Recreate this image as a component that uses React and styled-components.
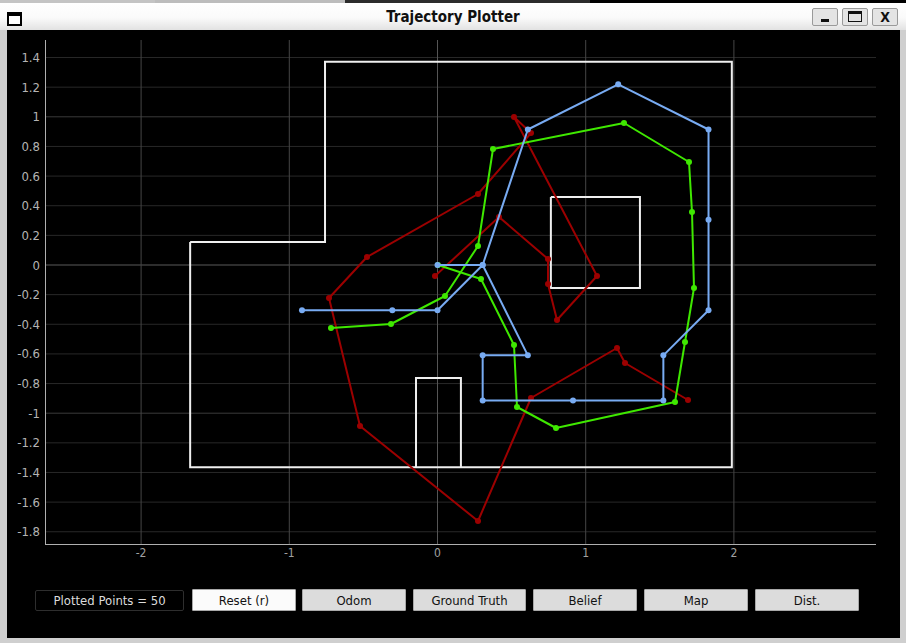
import React from "react";
import styled, { createGlobalStyle } from "styled-components";

const GlobalStyle = createGlobalStyle`
  html, body {
    margin: 0;
    padding: 0;
    background: #c9c9c9;
    overflow: hidden;
  }
  * { box-sizing: border-box; }
`;

const FONT = `"DejaVu Sans Condensed", "DejaVu Sans", sans-serif`;

// world -> page pixels
const X0 = 437.5;
const Y0 = 265;
const S = 148.2;
const px = (x) => X0 + x * S;
const py = (y) => Y0 - y * S;

const FT = 0.3048;

const blue = [
  [0, 0], [1, 0], [2, -2], [1, -2], [1, -3], [3, -3], [5, -3], [5, -2],
  [6, -1], [6, 1], [6, 3], [4, 4], [2, 3], [1, 0], [0, -1], [-1, -1], [-3, -1],
].map(([x, y]) => [px(x * FT), py(y * FT)]);

const green = [
  [438, 265], [481, 279], [514, 345], [517, 407], [556, 428], [675, 402],
  [685, 342], [694, 288], [692, 212], [689, 162], [624, 123], [493, 149],
  [478, 246], [445, 296], [391, 324], [331, 328],
];

const red = [
  [435, 276], [499, 217], [548, 259], [548, 284], [557, 320], [597, 276],
  [514, 117], [531, 133], [478, 194], [367, 257], [329, 298], [360, 426],
  [478, 521], [531, 398], [617, 348], [625, 363], [688, 400],
];

const mapLines = [
  [[-1.669, 0.155], [-0.759, 0.155], [-0.759, 1.371], [1.986, 1.371], [1.986, -1.364], [-1.669, -1.364], [-1.669, 0.155]],
  [[0.765, 0.459], [1.366, 0.459], [1.366, -0.155], [0.765, -0.155], [0.765, 0.459]],
  [[-0.145, -1.364], [-0.145, -0.763], [0.158, -0.763], [0.158, -1.364]],
];

const yTicks = [];
for (let i = -9; i <= 7; i++) yTicks.push(i / 5);
const xTicks = [-2, -1, 0, 1, 2];

const fmt = (v) => (Math.abs(v) < 1e-9 ? "0" : String(+v.toFixed(1)));

const Frame = styled.div`
  width: 906px;
  height: 643px;
  display: flex;
  flex-direction: column;
  background: #cfcfcf;
`;

const Desktop = styled.div`
  height: 3px;
  display: flex;
`;

const DeskPart = styled.div`
  width: ${(p) => p.$w};
  flex: ${(p) => (p.$w ? "none" : 1)};
  background: ${(p) => p.$c};
`;

const TitleBar = styled.div`
  height: 27px;
  display: flex;
  align-items: center;
  padding: 0 7px;
  background: linear-gradient(#ffffff 0%, #fafafa 55%, #e2e2e2 100%);
`;

const AppIcon = styled.div`
  width: 15px;
  height: 14px;
  margin-top: 4px;
  border: 2px solid #000;
  border-top-width: 4px;
  background: #fff;
`;

const Title = styled.div`
  flex: 1;
  text-align: center;
  font-family: ${FONT};
  font-weight: bold;
  font-size: 15px;
  color: #111;
  padding-left: 72px;
`;

const Controls = styled.div`
  display: flex;
  gap: 4px;
  margin-right: 1px;
`;

const CtlButton = styled.div`
  width: 26px;
  height: 18px;
  border: 1px solid #9a9a9a;
  border-radius: 2px;
  background: #e4e4e4;
  display: flex;
  align-items: center;
  justify-content: center;
  font-family: ${FONT};
  font-size: 14px;
  font-weight: bold;
  color: #111;
`;

const MinGlyph = styled.span`
  width: 8px;
  height: 3px;
  margin-top: 8px;
  background: #111;
`;

const MaxGlyph = styled.span`
  width: 14px;
  height: 11px;
  border: 1px solid #111;
  border-top-width: 3px;
`;

const Body = styled.div`
  flex: 1;
  margin: 0 6px 5px 7px;
  background: #000;
  display: flex;
  flex-direction: column;
`;

const Chart = styled.svg`
  display: block;
  width: 893px;
  height: 547px;
`;

const ButtonRow = styled.div`
  display: flex;
  align-items: center;
  padding: 12px 0 0 28px;
`;

const Counter = styled.div`
  width: 149px;
  height: 21px;
  margin-right: 8px;
  border: 1px solid #2e2e2e;
  border-radius: 2px;
  color: #dcdcdc;
  font-family: ${FONT};
  font-size: 13px;
  display: flex;
  align-items: center;
  justify-content: center;
`;

const Button = styled.button`
  width: ${(p) => p.$w || 104}px;
  height: 22px;
  margin-right: ${(p) => p.$gap ?? 7}px;
  padding: 0;
  border: 1px solid #a8a8a8;
  border-radius: 1px;
  background: ${(p) => (p.$active ? "#fbfbfb" : "#dcdcdc")};
  color: #111;
  font-family: ${FONT};
  font-size: 13px;
`;

const Path = ({ pts, color }) => (
  <g>
    <polyline
      points={pts.map((p) => p.join(",")).join(" ")}
      fill="none"
      stroke={color}
      strokeWidth="2"
      strokeLinejoin="round"
    />
    {pts.map(([x, y], i) => (
      <circle key={i} cx={x} cy={y} r="3" fill={color} />
    ))}
  </g>
);

const Plot = () => (
  <Chart viewBox="7 30 893 547">
    {yTicks.map((v) => (
      <line
        key={"h" + v}
        x1={45}
        x2={876}
        y1={py(v)}
        y2={py(v)}
        stroke={Math.abs(v) < 1e-9 ? "#5a5a5a" : Number.isInteger(v) ? "#3a3a3a" : "#282828"}
        strokeWidth="1"
      />
    ))}
    {xTicks.map((v) => (
      <line
        key={"v" + v}
        x1={px(v)}
        x2={px(v)}
        y1={40}
        y2={544}
        stroke={v === 0 ? "#555" : "#454545"}
        strokeWidth="1"
      />
    ))}
    <line x1={45.5} x2={45.5} y1={40} y2={544} stroke="#b0b0b0" strokeWidth="1" />
    <line x1={45} x2={876} y1={544.5} y2={544.5} stroke="#b0b0b0" strokeWidth="1" />
    {yTicks.map((v) => (
      <text
        key={"yl" + v}
        x={40}
        y={py(v) + 4.5}
        textAnchor="end"
        fill="#b4b4b4"
        fontFamily={FONT}
        fontSize="13"
      >
        {fmt(v)}
      </text>
    ))}
    {xTicks.map((v) => (
      <text
        key={"xl" + v}
        x={px(v)}
        y={557}
        textAnchor="middle"
        fill="#a0a0a0"
        fontFamily={FONT}
        fontSize="12"
      >
        {fmt(v)}
      </text>
    ))}
    {mapLines.map((l, i) => (
      <polyline
        key={"m" + i}
        points={l.map(([x, y]) => `${px(x)},${py(y)}`).join(" ")}
        fill="none"
        stroke="#efefef"
        strokeWidth="2"
      />
    ))}
    <Path pts={red} color="#9c0000" />
    <Path pts={green} color="#3fe800" />
    <Path pts={blue} color="#78abf2" />
  </Chart>
);

export default function App() {
  return (
    <>
      <GlobalStyle />
      <Frame>
        <Desktop>
          <DeskPart $w="155px" $c="#c4c4c4" />
          <DeskPart $w="190px" $c="#bdbdbd" />
          <DeskPart $w="245px" $c="#2c2c2c" />
          <DeskPart $c="#000" />
        </Desktop>
        <TitleBar>
          <AppIcon />
          <Title>Trajectory Plotter</Title>
          <Controls>
            <CtlButton><MinGlyph /></CtlButton>
            <CtlButton><MaxGlyph /></CtlButton>
            <CtlButton>X</CtlButton>
          </Controls>
        </TitleBar>
        <Body>
          <Plot />
          <ButtonRow>
            <Counter>Plotted Points = 50</Counter>
            <Button $active $gap={6}>Reset (r)</Button>
            <Button>Odom</Button>
            <Button $w={113}>Ground Truth</Button>
            <Button>Belief</Button>
            <Button>Map</Button>
            <Button>Dist.</Button>
          </ButtonRow>
        </Body>
      </Frame>
    </>
  );
}
